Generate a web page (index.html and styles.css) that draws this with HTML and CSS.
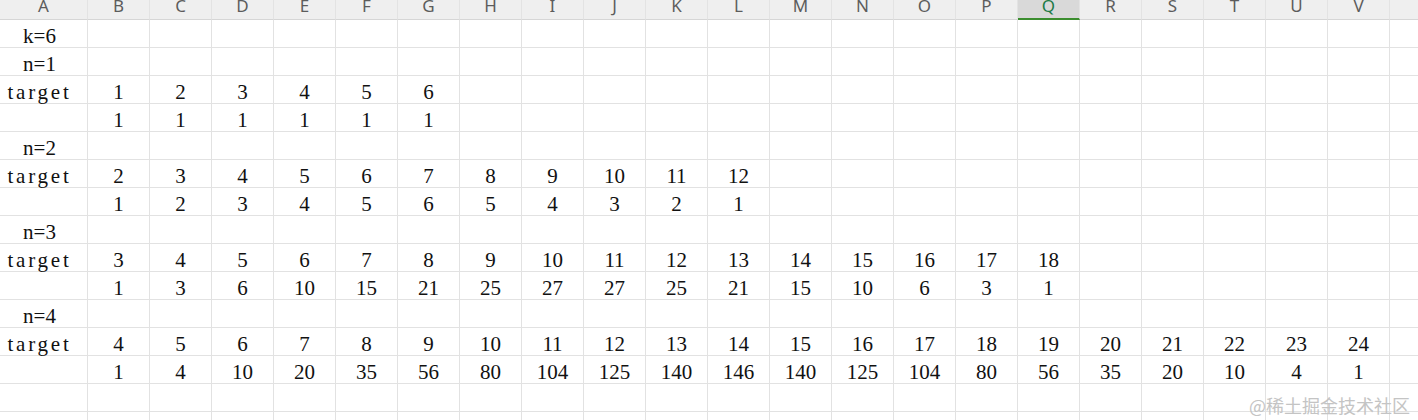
FILE: index.html
```html
<!DOCTYPE html>
<html lang="zh">
<head>
  <meta charset="UTF-8">
  <title>dice sums</title>
  <link rel="stylesheet" href="styles.css">
</head>
<body>
  <div class="sheet" id="sheet"></div>
  <div class="watermark">@稀土掘金技术社区</div>

  <script>
    // last column is only a sliver at the right edge, its letter is off screen
    const letters = "ABCDEFGHIJKLMNOPQRSTUV".split("").concat([""]);
    const activeCol = "Q";

    // rows: first value goes in column A, the rest from column B on
    const rows = [
      ["k=6"],
      ["n=1"],
      ["target", 1, 2, 3, 4, 5, 6],
      ["", 1, 1, 1, 1, 1, 1],
      ["n=2"],
      ["target", 2, 3, 4, 5, 6, 7, 8, 9, 10, 11, 12],
      ["", 1, 2, 3, 4, 5, 6, 5, 4, 3, 2, 1],
      ["n=3"],
      ["target", 3, 4, 5, 6, 7, 8, 9, 10, 11, 12, 13, 14, 15, 16, 17, 18],
      ["", 1, 3, 6, 10, 15, 21, 25, 27, 27, 25, 21, 15, 10, 6, 3, 1],
      ["n=4"],
      ["target", 4, 5, 6, 7, 8, 9, 10, 11, 12, 13, 14, 15, 16, 17, 18, 19, 20, 21, 22, 23, 24],
      ["", 1, 4, 10, 20, 35, 56, 80, 104, 125, 140, 146, 140, 125, 104, 80, 56, 35, 20, 10, 4, 1],
      [],
      []
    ];

    const sheet = document.getElementById("sheet");

    letters.forEach(l => {
      const el = document.createElement("div");
      el.className = "cell head" + (l === activeCol ? " active" : "");
      el.textContent = l;
      sheet.appendChild(el);
    });

    rows.forEach(row => {
      letters.forEach((l, i) => {
        const el = document.createElement("div");
        el.className = "cell" + (i === 0 ? " first" : "");
        const v = row[i];
        if (v !== undefined) el.textContent = v;
        if (v === "target") el.classList.add("label");
        sheet.appendChild(el);
      });
    });
  </script>
</body>
</html>
```

FILE: styles.css
```css
body {
  margin: 0;
  overflow: hidden;
  background: #fff;
  color: #111;
  font-family: "Liberation Serif", serif;
}

/* Sheet grid */
.sheet {
  display: grid;
  grid-template-columns: 88px repeat(22, 62px);
  grid-template-rows: 20px;
  grid-auto-rows: 28px;
}

.cell {
  box-sizing: border-box;
  border-right: 1px solid #e2e2e2;
  border-bottom: 1px solid #e2e2e2;
  padding-top: 2px;
  font-size: 21px;
  line-height: 28px;
  text-align: center;
  white-space: nowrap;
}

.cell.first {
  padding-right: 8px;
}

.cell.label {
  letter-spacing: 2.8px;
}

/* Column header letters */
.head {
  padding-top: 0;
  background: #efefef;
  border-right-color: #e3e3e3;
  border-bottom-color: #d6d6d6;
  color: #5c5c5c;
  font-family: "Noto Sans", sans-serif;
  font-size: 17px;
  line-height: 11px;
}

.head.active {
  background: #d9d9d9;
  color: #1d7a46;
  border-bottom: 2px solid #3b8d2e;
}

/* Site watermark over the sheet */
.watermark {
  position: absolute;
  right: 8px;
  bottom: 6px;
  color: #c4c4c4;
  font-family: "Noto Sans CJK SC", sans-serif;
  font-size: 18px;
  line-height: 1;
}
```
